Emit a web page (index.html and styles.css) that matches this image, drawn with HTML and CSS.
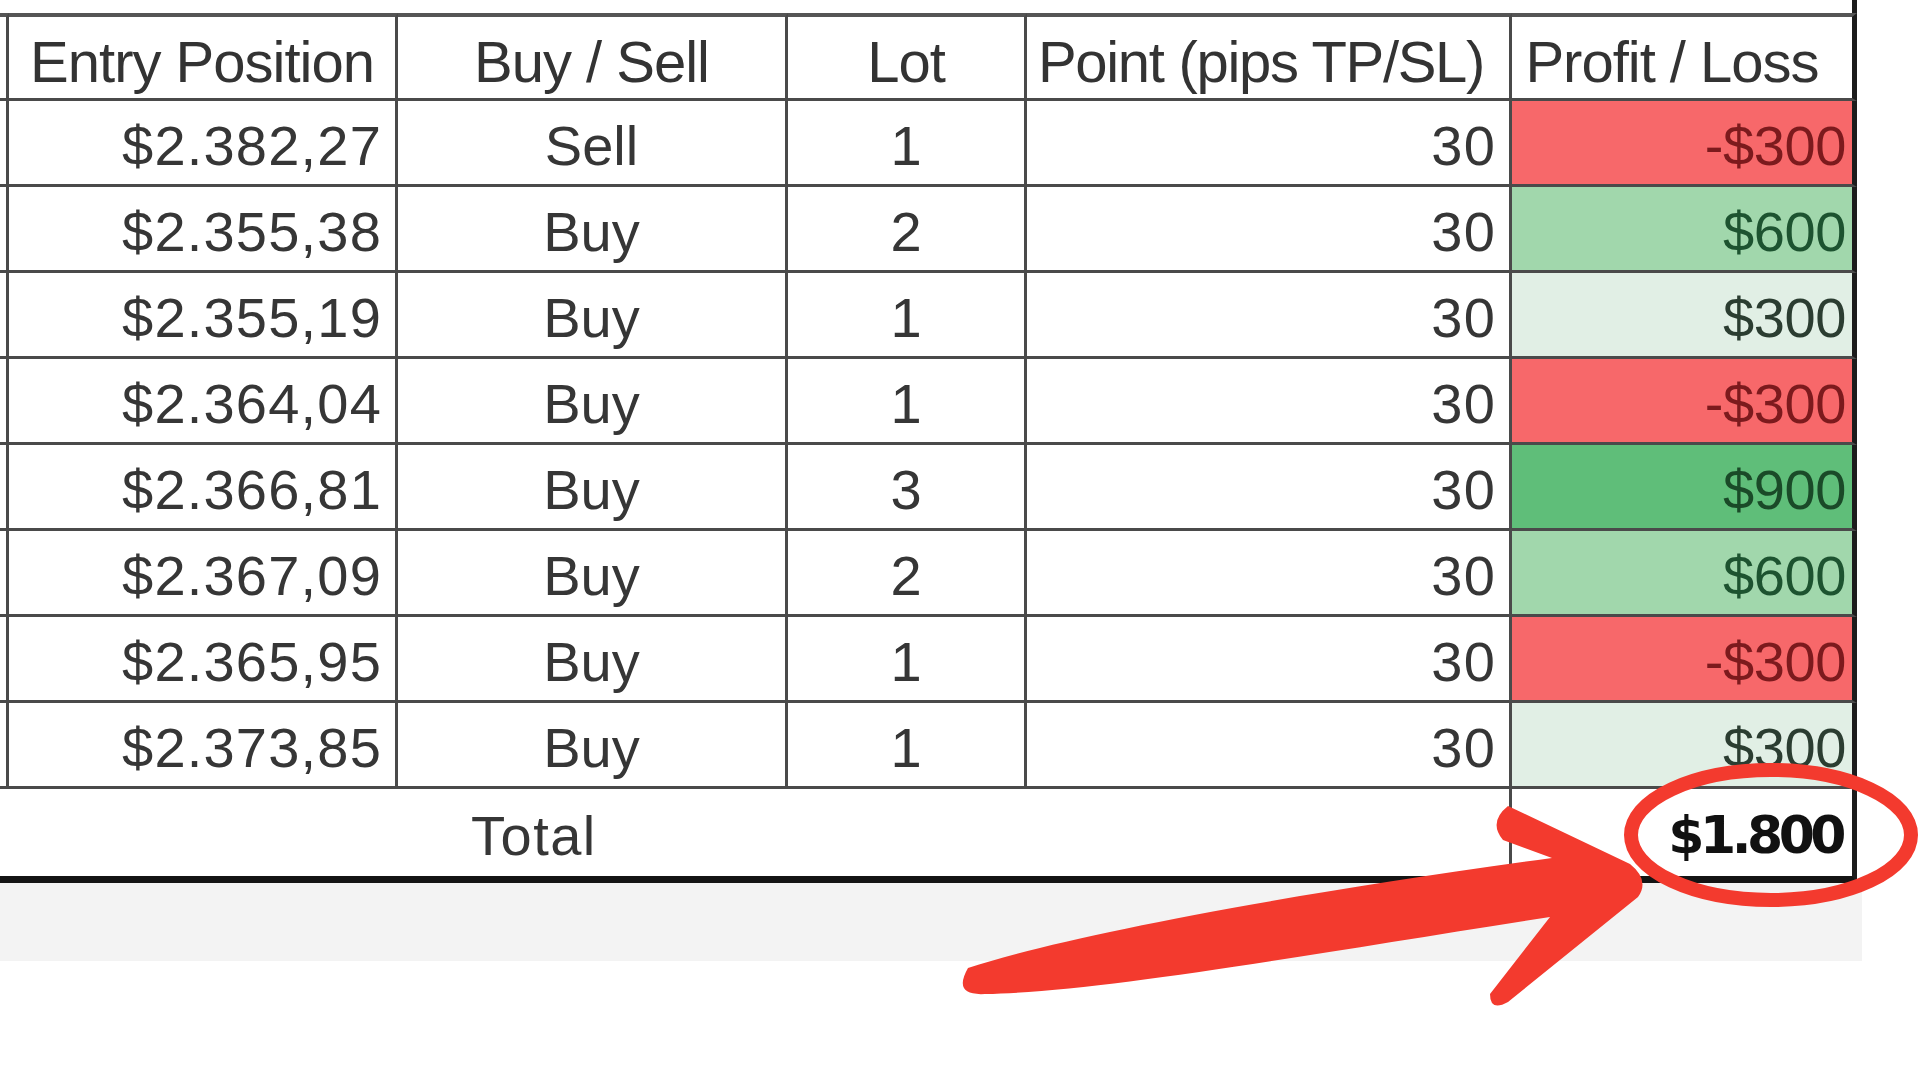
FILE: index.html
```html
<!DOCTYPE html>
<html lang="en">
<head>
<meta charset="utf-8">
<title>Trade results</title>
<link rel="stylesheet" href="styles.css">
</head>
<body>
<div class="page">
  <div class="sheet">
    <div class="c cap"></div><div class="c cap"></div><div class="c cap"></div><div class="c cap"></div><div class="c cap"></div><div class="c cap last"></div>

    <div class="c edge hd"></div>
    <div class="c hd mid"><span class="ht">Entry Position</span></div>
    <div class="c hd mid"><span class="ht">Buy / Sell</span></div>
    <div class="c hd mid"><span class="ht">Lot</span></div>
    <div class="c hd mid shift-a"><span class="ht tight">Point (pips TP/SL)</span></div>
    <div class="c hd mid shift-b last"><span class="ht">Profit / Loss</span></div>

    <div class="c edge"></div>
    <div class="c num">$2.382,27</div><div class="c mid">Sell</div><div class="c mid">1</div><div class="c num">30</div><div class="c pl loss last">-$300</div>

    <div class="c edge"></div>
    <div class="c num">$2.355,38</div><div class="c mid">Buy</div><div class="c mid">2</div><div class="c num">30</div><div class="c pl gain2 last">$600</div>

    <div class="c edge"></div>
    <div class="c num">$2.355,19</div><div class="c mid">Buy</div><div class="c mid">1</div><div class="c num">30</div><div class="c pl gain1 last">$300</div>

    <div class="c edge"></div>
    <div class="c num">$2.364,04</div><div class="c mid">Buy</div><div class="c mid">1</div><div class="c num">30</div><div class="c pl loss last">-$300</div>

    <div class="c edge"></div>
    <div class="c num">$2.366,81</div><div class="c mid">Buy</div><div class="c mid">3</div><div class="c num">30</div><div class="c pl gain3 last">$900</div>

    <div class="c edge"></div>
    <div class="c num">$2.367,09</div><div class="c mid">Buy</div><div class="c mid">2</div><div class="c num">30</div><div class="c pl gain2 last">$600</div>

    <div class="c edge"></div>
    <div class="c num">$2.365,95</div><div class="c mid">Buy</div><div class="c mid">1</div><div class="c num">30</div><div class="c pl loss last">-$300</div>

    <div class="c edge"></div>
    <div class="c num">$2.373,85</div><div class="c mid">Buy</div><div class="c mid">1</div><div class="c num">30</div><div class="c pl gain1 last">$300</div>

    <div class="c total-label">Total</div>
    <div class="c total-value last">$1.800</div>
  </div>
  <div class="shade"></div>

  <svg class="markup" width="1920" height="1080" viewBox="0 0 1920 1080" aria-hidden="true">
    <ellipse cx="1771" cy="835" rx="140" ry="65" fill="none" stroke="#f33a2e" stroke-width="14"/>
    <path fill="#f33a2e" d="M 968 968 C 1060 938, 1260 898, 1552 858 L 1503 840 Q 1488 822, 1508 806 L 1630 864 Q 1650 880, 1638 897 L 1508 1002 Q 1490 1012, 1490 994 L 1550 917 C 1300 956, 1100 992, 985 994 Q 952 996, 968 968 Z"/>
  </svg>
</div>
</body>
</html>
```

FILE: styles.css
```css
html, body {
  margin: 0;
  padding: 0;
  background: #ffffff;
}

body {
  width: 1920px;
  height: 1080px;
  overflow: hidden;
  font-family: "Liberation Sans", Arial, sans-serif;
  color: #363636;
}

.page {
  position: relative;
  width: 1920px;
  height: 1080px;
}

.sheet {
  display: grid;
  grid-template-columns: 9px 389px 390px 239px 485px 345px;
  grid-template-rows: 13px 88px repeat(8, 86px) 94px;
  width: 1857px;
}

.c {
  box-sizing: border-box;
  display: flex;
  align-items: flex-end;
  border-right: 3px solid #4a4a4a;
  border-bottom: 3px solid #4a4a4a;
  font-size: 56px;
  line-height: 1;
  padding-bottom: 10px;
  white-space: nowrap;
  background: #ffffff;
}

.c.cap {
  border: 0;
  padding: 0;
}

.c.last {
  border-right: 5px solid #1c1c1c;
}

.c.cap.last {
  border-right: 5px solid #1c1c1c;
}

.c.hd {
  border-top: 4px solid #555555;
  padding-bottom: 7px;
}

.c.shift-a {
  padding-right: 14px;
}

.c.shift-b {
  padding-right: 20px;
}

.ht {
  font-size: 58px;
  letter-spacing: -1px;
  color: #333333;
}

.ht.tight {
  letter-spacing: -1.3px;
}

.mid {
  justify-content: center;
}

.num {
  justify-content: flex-end;
  padding-right: 13px;
  letter-spacing: 1.2px;
}

.pl {
  justify-content: flex-end;
  padding-right: 6px;
  letter-spacing: -0.4px;
}

.loss {
  background: #f7686a;
  color: #7c1a1d;
}

.gain1 {
  background: #e1efe5;
  color: #2b3d31;
}

.gain2 {
  background: #a1d7ac;
  color: #1d5330;
}

.gain3 {
  background: #5fbe79;
  color: #1a4a28;
}

.total-label {
  grid-column: span 5;
  padding-left: 471px;
  padding-bottom: 12px;
  letter-spacing: 1.5px;
  border-bottom: 7px solid #141414;
}

.total-value {
  justify-content: flex-end;
  padding-right: 10px;
  padding-bottom: 15px;
  border-bottom: 7px solid #141414;
  font-family: "DejaVu Sans", "Liberation Sans", sans-serif;
  font-weight: bold;
  font-size: 52px;
  letter-spacing: -4.5px;
  color: #111111;
}

.shade {
  width: 1862px;
  height: 78px;
  background: #f3f3f3;
}

.markup {
  position: absolute;
  left: 0;
  top: 0;
  pointer-events: none;
}
```
